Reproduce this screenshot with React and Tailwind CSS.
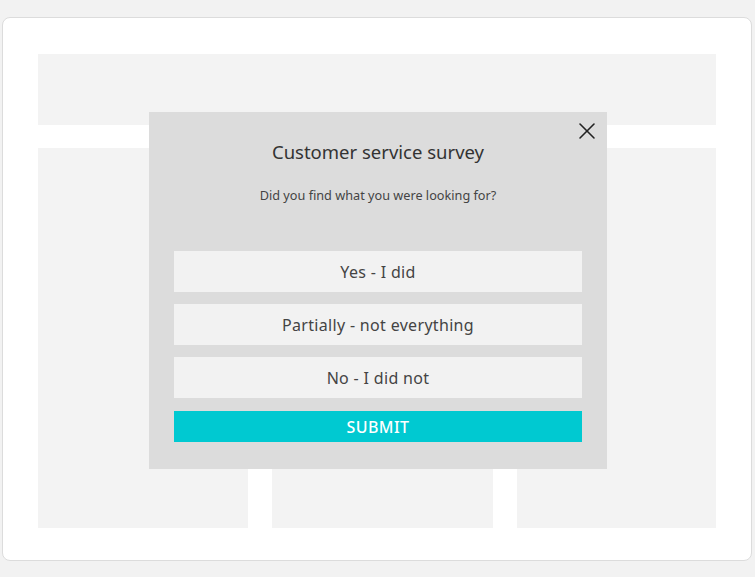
import { X } from "lucide-react";

const options = ["Yes - I did", "Partially - not everything", "No - I did not"];

export default function App() {
  return (
    <div className="w-[755px] h-[577px] bg-[#f2f2f2] pt-[17px] pl-[2px] overflow-hidden" style={{ fontFamily: '"Noto Sans", sans-serif' }}>
      <div className="relative w-[750px] h-[544px] bg-white border border-[#dcdcdc] rounded-lg pt-[36px] pl-[35px]">
        {/* page skeleton */}
        <div className="w-[678px] h-[71px] bg-[#f3f3f3]" />
        <div className="mt-[23px] grid grid-cols-[210px_221px_199px] gap-6">
          <div className="h-[380px] bg-[#f3f3f3]" />
          <div className="h-[380px] bg-[#f3f3f3]" />
          <div className="h-[380px] bg-[#f3f3f3]" />
        </div>

        {/* survey modal */}
        <div className="absolute left-[146px] top-[94px] w-[458px] h-[357px] bg-[#dcdcdc] px-[25px] pt-[29px]">
          <button className="absolute right-[6px] top-[5px] text-[#222]">
            <X size={28} strokeWidth={1.3} />
          </button>
          <h2 className="text-center text-[18.5px] leading-[22px] text-[#333]">Customer service survey</h2>
          <p className="mt-[23px] text-center text-[12.7px] leading-[18px] text-[#444]">Did you find what you were looking for?</p>
          <div className="mt-[47px] flex flex-col gap-3">
            {options.map((o) => (
              <button key={o} className="h-[41px] w-full bg-[#f2f2f2] text-[16px] text-[#444] tracking-[0.02em]">
                {o}
              </button>
            ))}
          </div>
          <button className="mt-[13px] h-[31px] w-full bg-[#00c9d1] text-white text-[16px] font-medium tracking-wide">
            SUBMIT
          </button>
        </div>
      </div>
    </div>
  );
}
